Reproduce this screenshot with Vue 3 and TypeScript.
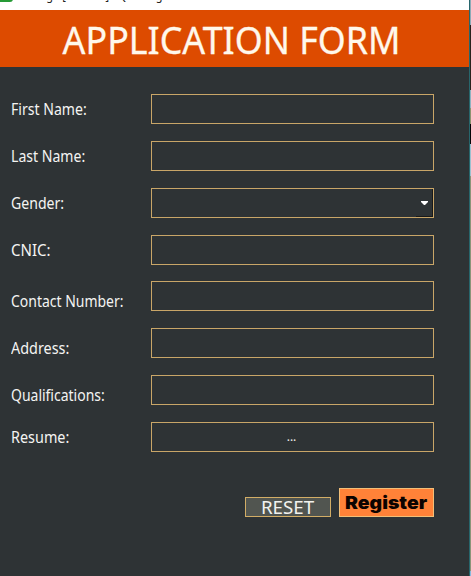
<script setup lang="ts">
interface Field {
  id: string
  label: string
  kind: 'text' | 'select' | 'file'
}

const fields: Field[] = [
  { id: 'first', label: 'First Name:', kind: 'text' },
  { id: 'last', label: 'Last Name:', kind: 'text' },
  { id: 'gender', label: 'Gender:', kind: 'select' },
  { id: 'cnic', label: 'CNIC:', kind: 'text' },
  { id: 'contact', label: 'Contact Number:', kind: 'text' },
  { id: 'address', label: 'Address:', kind: 'text' },
  { id: 'qualifications', label: 'Qualifications:', kind: 'text' },
  { id: 'resume', label: 'Resume:', kind: 'file' },
]
</script>

<template>
  <div class="desktop">
    <main class="window">
      <div class="titlebar">
        <span class="app-icon"></span>
        <span class="caption">Dialog - [Preview] - Qt Designer</span>
      </div>
      <header class="banner"><h1>APPLICATION FORM</h1></header>
      <form class="form" @submit.prevent>
        <div v-for="f in fields" :key="f.id" class="row" :class="f.id">
          <label :for="f.id"><span>{{ f.label }}</span></label>
          <div v-if="f.kind === 'select'" :id="f.id" class="box select">
            <span class="drop">
              <svg width="7" height="4" viewBox="0 0 7 4"><path d="M0 0h7v1L4 4H3L0 1z" fill="#fff" /></svg>
            </span>
          </div>
          <button v-else-if="f.kind === 'file'" :id="f.id" type="button" class="box file">...</button>
          <input v-else :id="f.id" type="text" class="box" />
        </div>
        <div class="actions">
          <button type="reset" class="reset"><span>RESET</span></button>
          <button type="submit" class="register"><span>Register</span></button>
        </div>
      </form>
    </main>
    <div class="edge"></div>
  </div>
</template>

<style>
body { overflow: hidden; }
</style>

<style scoped>
.desktop {
  display: flex;
  width: 471px;
  height: 576px;
  overflow: hidden;
  font-family: "Noto Sans", "DejaVu Sans", sans-serif;
}
.window {
  width: 469px;
  height: 576px;
  background: #2e3335;
}
.titlebar {
  display: flex;
  align-items: flex-end;
  height: 10px;
  background: #fff;
  overflow: hidden;
}
.app-icon {
  flex: none;
  width: 13px;
  height: 13px;
  margin-bottom: 8px;
  border-radius: 0 0 3px 0;
  background: #269a36;
}
.caption {
  margin: 0 0 6px 7px;
  font-size: 12px;
  line-height: 16px;
  color: #222;
  white-space: nowrap;
  transform: scaleX(0.91);
  transform-origin: 0 0;
}
.banner {
  height: 57px;
  background: #dd4b00;
  display: flex;
  justify-content: center;
}
h1 {
  margin: 0;
  padding-right: 7px;
  font-size: 38px;
  font-weight: 400;
  line-height: 58px;
  color: #fff8ec;
  -webkit-text-stroke: 0.3px #fff8ec;
  white-space: nowrap;
  transform: scaleX(0.942);
}
.form { padding: 27px 0 0 11px; }
.row {
  display: flex;
  height: 47px;
}
.cnic { height: 46px; }
.resume { height: 66px; }
label {
  width: 140px;
  font-size: 16px;
  line-height: 30px;
  color: #f4f4f2;
  white-space: nowrap;
}
label span {
  display: inline-block;
  transform: scaleX(0.88);
  transform-origin: 0 0;
}
.cnic label span { transform: scaleX(0.94); }
.address label span, .resume label span { transform: scaleX(0.9); }
.contact label, .address label, .qualifications label { padding-top: 5px; }
.contact label span, .qualifications label span { transform: scaleX(0.873); }
.box {
  display: block;
  box-sizing: border-box;
  width: 283px;
  height: 30px;
  margin: 0;
  padding: 0;
  border: 1px solid #c9a668;
  border-radius: 0;
  outline: 0;
  background: transparent;
  color: #f0f0ee;
}
.select {
  display: flex;
  justify-content: flex-end;
}
.drop {
  display: flex;
  align-items: center;
  justify-content: center;
  width: 16px;
  border-right: 1px solid #17191a;
  border-bottom: 1px solid #17191a;
}
.file {
  padding-right: 2px;
  font: 12px/28px "Noto Sans", sans-serif;
  text-align: center;
}
.actions {
  display: flex;
  align-items: flex-end;
  gap: 8px;
  height: 29px;
  padding-left: 234px;
}
.actions button {
  display: flex;
  align-items: center;
  justify-content: center;
  box-sizing: border-box;
  margin: 0;
  padding: 0;
}
.reset {
  width: 86px;
  height: 20px;
  border: 1px solid #d2ad66;
  background: #515550;
  color: #f2f2ee;
  font: 18px/20px "Noto Sans", sans-serif;
}
.reset span {
  display: inline-block;
  transform: scaleX(1.04);
}
.register {
  width: 95px;
  height: 29px;
  border: 1px solid #f2bf78;
  background: #ff8238;
  color: #0c0300;
  font: 900 18px/27px "Inter", "Liberation Sans", sans-serif;
}
.register span {
  display: inline-block;
  transform: scaleX(1.08);
}
.edge {
  width: 1px;
  height: 576px;
  border-left: 1px solid #27666c;
  background: linear-gradient(#8cabb7 0 25px, #29221d 25px 90px, #8eb3c0 90px 108px, #8c9270 108px 124px, #050607 124px 144px, #9bc1cf 144px 176px, #8b9479 176px 571px, #86b9dc 571px);
}
</style>
